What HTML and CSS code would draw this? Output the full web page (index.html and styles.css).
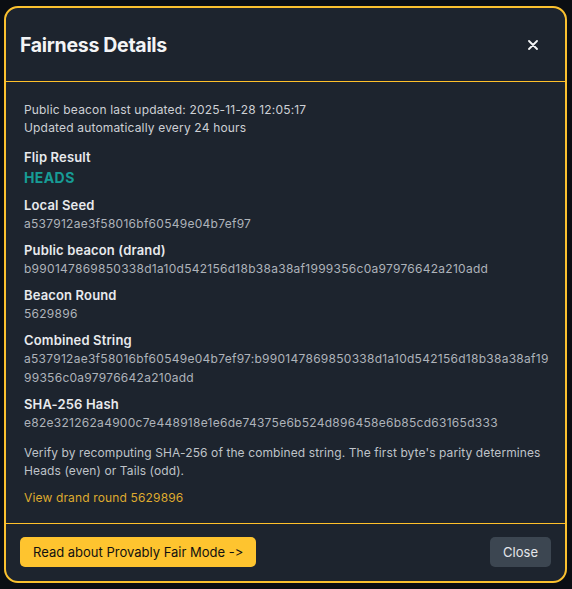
FILE: index.html
```html
<!DOCTYPE html>
<html>
<head>
    <meta charset="UTF-8" />
    <meta name="viewport" content="width=device-width, initial-scale=1.0">
    <title>Fairness Details</title>
    <link rel="stylesheet" href="styles.css">
</head>

<body>
    <div class="overlay">
        <div class="modal">
            <div class="modal-header">
                <h2 class="modal-title">Fairness Details</h2>
                <button class="icon-btn" aria-label="Close">
                    <svg width="10" height="10" viewBox="0 0 10 10" fill="none" stroke="currentColor" stroke-width="1.8" stroke-linecap="round">
                        <path d="M1 1L9 9M9 1L1 9" />
                    </svg>
                </button>
            </div>

            <div class="modal-body">
                <div class="meta">
                    <div>Public beacon last updated: 2025-11-28 12:05:17</div>
                    <div>Updated automatically every 24 hours</div>
                </div>

                <div class="field">
                    <div class="field-label">Flip Result</div>
                    <div class="flip-result">HEADS</div>
                </div>

                <div class="field">
                    <div class="field-label">Local Seed</div>
                    <div class="field-value">a537912ae3f58016bf60549e04b7ef97</div>
                </div>

                <div class="field">
                    <div class="field-label">Public beacon (drand)</div>
                    <div class="field-value">b990147869850338d1a10d542156d18b38a38af1999356c0a97976642a210add</div>
                </div>

                <div class="field">
                    <div class="field-label">Beacon Round</div>
                    <div class="field-value">5629896</div>
                </div>

                <div class="field">
                    <div class="field-label">Combined String</div>
                    <div class="field-value">a537912ae3f58016bf60549e04b7ef97:b990147869850338d1a10d542156d18b38a38af1999356c0a97976642a210add</div>
                </div>

                <div class="field">
                    <div class="field-label">SHA-256 Hash</div>
                    <div class="field-value">e82e321262a4900c7e448918e1e6de74375e6b524d896458e6b85cd63165d333</div>
                </div>

                <p class="note">Verify by recomputing SHA-256 of the combined string. The first byte's parity determines Heads (even) or Tails (odd).</p>

                <a class="drand-link" href="#">View drand round 5629896</a>
            </div>

            <div class="modal-footer">
                <button class="btn btn-primary">Read about Provably Fair Mode -&gt;</button>
                <button class="btn btn-secondary">Close</button>
            </div>
        </div>
    </div>
</body>
</html>
```

FILE: styles.css
```css
* {
    margin: 0;
    padding: 0;
    box-sizing: border-box;
    font-family: "Inter", "Noto Sans", sans-serif;
    /* keep "->" as two plain characters */
    font-feature-settings: "calt" 0, "liga" 0;
}

body {
    background-color: #0b0e13;
    min-height: 100vh;
}

.overlay {
    padding: 6px 5px 5px 4px;
}

.modal {
    background-color: #1d242e;
    border: 2px solid #fbc12f;
    border-radius: 14px;
    color: #e5e7eb;
    overflow: hidden;
}

.modal-header {
    height: 74px;
    padding: 0 18px 0 14px;
    display: flex;
    align-items: center;
    justify-content: space-between;
    border-bottom: 1px solid #ffc02a;
}

.modal-title {
    font-size: 19.5px;
    font-weight: 700;
    color: #f3f4f6;
    letter-spacing: -0.3px;
}

.icon-btn {
    width: 28px;
    height: 28px;
    display: flex;
    align-items: center;
    justify-content: center;
    background: none;
    border: none;
    color: #f3f4f6;
    cursor: pointer;
}

.modal-body {
    padding: 19px 15px 18px 18px;
    height: 441px;
}

.meta {
    font-size: 12px;
    line-height: 18px;
    color: #cdd0d5;
    letter-spacing: 0.17px;
    margin-bottom: 12px;
}

.field {
    margin-bottom: 9px;
}

.field-label {
    font-size: 13px;
    font-weight: 600;
    line-height: 17px;
    color: #e8eaed;
    letter-spacing: 0.15px;
}

.field-value {
    font-size: 12px;
    line-height: 19px;
    color: #aeb3ba;
    letter-spacing: 0.27px;
    word-break: break-all;
}

.flip-result {
    margin-top: 2px;
    font-size: 14px;
    font-weight: 700;
    line-height: 20px;
    color: #179c96;
    letter-spacing: 0.4px;
}

.note {
    margin-top: 12px;
    font-size: 12px;
    line-height: 18px;
    color: #bfc3c9;
    letter-spacing: 0.1px;
}

.drand-link {
    display: block;
    margin-top: 9px;
    font-size: 12px;
    line-height: 18px;
    color: #dfab2e;
    letter-spacing: 0.15px;
    text-decoration: none;
}

.modal-footer {
    display: flex;
    justify-content: space-between;
    align-items: center;
    padding: 13px 14px 14px;
    border-top: 1px solid #ffc02a;
}

.btn {
    height: 30px;
    padding: 0 13px;
    border: none;
    border-radius: 5px;
    font-size: 13px;
    cursor: pointer;
}

.btn-primary {
    background-color: #fec42f;
    color: #111;
}

.btn-secondary {
    background-color: #3c4651;
    color: #e5e7eb;
}
```
